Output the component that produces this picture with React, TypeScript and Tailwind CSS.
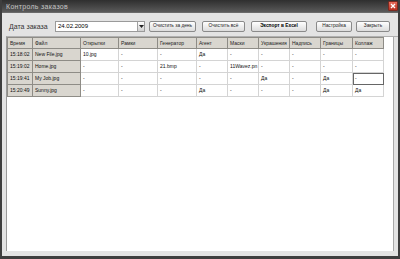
const cols = [
  { title: "Время", w: 25 },
  { title: "Файл", w: 48 },
  { title: "Открытки", w: 38 },
  { title: "Рамки", w: 39 },
  { title: "Генератор", w: 39 },
  { title: "Агент", w: 31 },
  { title: "Маски", w: 31 },
  { title: "Украшения", w: 31 },
  { title: "Надпись", w: 31 },
  { title: "Границы", w: 32 },
  { title: "Коллаж", w: 31 },
];

const rows = [
  ["15:18:02", "New File.jpg", "10.jpg", "-", "-", "Да", "-", "-", "-", "-", "-"],
  ["15:19:02", "Home.jpg", "-", "-", "21.bmp", "-", "11Wavez.pn", "-", "-", "-", "-"],
  ["15:19:41", "My Job.jpg", "-", "-", "-", "-", "-", "Да", "-", "Да", "-"],
  ["15:20:49", "Sunny.jpg", "-", "-", "-", "Да", "-", "-", "-", "Да", "Да"],
];

function Button({ label, w, bold }: { label: string; w: string; bold?: boolean }) {
  return (
    <div
      className={`${w} h-[11px] flex items-center justify-center rounded-[2px] border border-[#8a8a8a] bg-gradient-to-b from-white to-[#dcdcdc] text-[4.8px] leading-none whitespace-nowrap ${
        bold ? "font-bold text-black" : "text-[#222]"
      }`}
    >
      {label}
    </div>
  );
}

export default function App() {
  return (
    <div
      className="w-[400px] h-[259px] flex flex-col bg-[#3e3e3e] px-[2px] pb-[3px]"
      style={{ fontFamily: '"Liberation Sans", Arial, sans-serif' }}
    >
      <div className="h-[12px] flex items-center justify-between bg-gradient-to-b from-[#2f2f2f] to-[#5a5a5a]">
        <span className="pl-[4px] text-[7px] leading-none text-[#c4c4c4] tracking-[0.3px]">
          Контроль заказов
        </span>
        <div className="w-[10px] h-[10px] rounded-[1px] bg-gradient-to-b from-[#e76a5a] to-[#b8301f] border border-[#7a2a20] flex items-center justify-center">
          <svg width="6" height="6" viewBox="0 0 6 6">
            <path d="M1 1 L5 5 M5 1 L1 5" stroke="white" strokeWidth="1.3" />
          </svg>
        </div>
      </div>
      <div className="flex-1 flex flex-col bg-[#e3e3e3] border-t border-[#6a6a6a]">
        <div className="h-[23px] flex items-center pt-[3px] pl-[7px] pr-[5px]">
          <span className="w-[46px] text-[7px] leading-none text-[#333]">Дата заказа</span>
          <div className="w-[90px] h-[11px] flex items-center bg-white border border-[#9a9a9a]">
            <span className="flex-1 pl-[2px] text-[6px] leading-none text-black">24.02.2009</span>
            <div className="w-[7px] h-[9px] flex items-center justify-center bg-gradient-to-b from-white to-[#d0d0d0] border-l border-[#a0a0a0]">
              <svg width="5" height="3" viewBox="0 0 5 3">
                <path d="M0 0 L5 0 L2.5 3 Z" fill="#222" />
              </svg>
            </div>
          </div>
          <div className="ml-[4px] flex gap-[6px]">
            <Button label="Очистить за день" w="w-[47px]" />
            <Button label="Очистить всё" w="w-[43px]" />
            <Button label="Экспорт в Excel" w="w-[56px]" bold />
          </div>
          <div className="ml-[9px] flex gap-[4px]">
            <Button label="Настройка" w="w-[36px]" />
            <Button label="Закрыть" w="w-[34px]" />
          </div>
        </div>
        <div className="flex-1 flex pl-[4px] pb-[5px]">
          <div className="flex-1 border-l border-[#9a9a9a] border-t border-t-[#b0b0b0] bg-white flex">
            <div className="flex-1">
              <table className="border-collapse text-[5px] leading-none" style={{ tableLayout: "fixed" }}>
                <colgroup>
                  {cols.map((c) => (
                    <col key={c.title} style={{ width: c.w }} />
                  ))}
                </colgroup>
                <thead>
                  <tr className="h-[11px]">
                    {cols.map((c) => (
                      <th
                        key={c.title}
                        className="bg-[#d9d6cf] border border-[#8e8c86] text-left font-normal pl-[2px] text-[#222] whitespace-nowrap overflow-hidden"
                      >
                        {c.title}
                      </th>
                    ))}
                  </tr>
                </thead>
                <tbody>
                  {rows.map((r, i) => (
                    <tr key={i} className="h-[12px]">
                      {r.map((v, j) => (
                        <td
                          key={j}
                          className={`pl-[2px] whitespace-nowrap overflow-hidden text-[#111] border ${
                            j < 2 ? "bg-[#d9d6cf] border-[#8e8c86]" : "bg-white border-[#d4d4d4]"
                          } ${i === 2 && j === 10 ? "outline outline-1 outline-[#666] -outline-offset-1" : ""}`}
                        >
                          {v}
                        </td>
                      ))}
                    </tr>
                  ))}
                </tbody>
              </table>
            </div>
            <div className="w-[5px] bg-[#e3e3e3] border-l border-[#a8a8a8]" />
          </div>
        </div>
      </div>
    </div>
  );
}
